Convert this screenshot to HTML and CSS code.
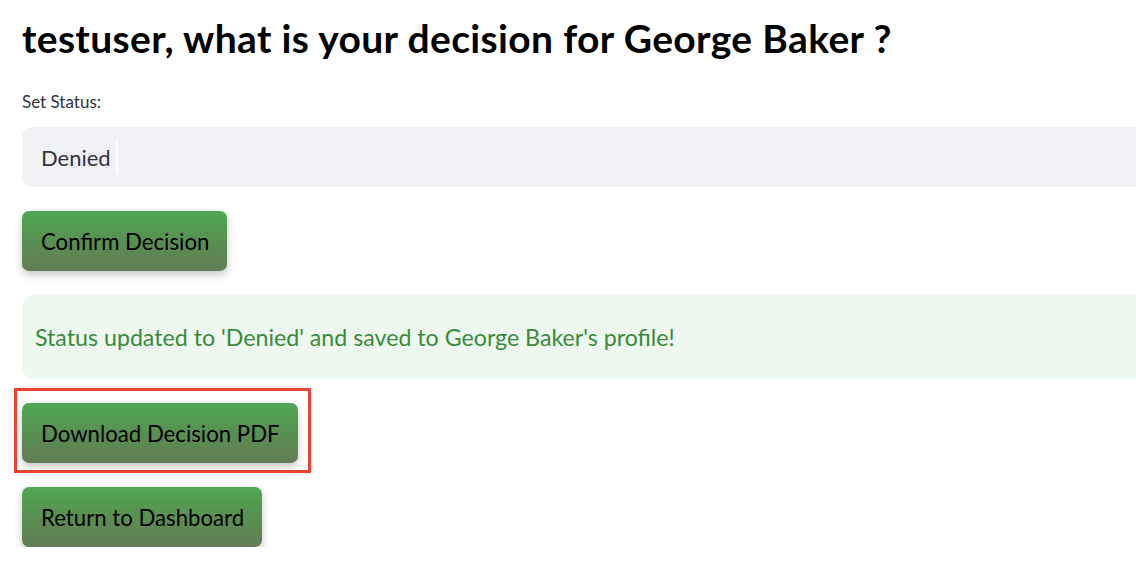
FILE: index.html
```html
<!DOCTYPE html>
<html lang="en">
<head>
<meta charset="utf-8">
<title>Decision</title>
<link rel="stylesheet" href="styles.css">
</head>
<body>
<main class="page">
  <h1 class="title">testuser, what is your decision for George Baker ?</h1>
  <div class="field">
    <label class="label">Set Status:</label>
    <div class="select"><span class="value">Denied</span><span class="caret"></span></div>
  </div>
  <div class="row"><button class="btn">Confirm Decision</button></div>
  <div class="alert">Status updated to 'Denied' and saved to George Baker's profile!</div>
  <div class="row highlight-wrap">
    <button class="btn">Download Decision PDF</button>
    <span class="highlight"></span>
  </div>
  <div class="row"><button class="btn">Return to Dashboard</button></div>
</main>
</body>
</html>
```

FILE: styles.css
```css
* { box-sizing: border-box; }
html, body { margin: 0; padding: 0; background: #ffffff; }
body {
  font-family: "Source Sans Pro", Lato, "Liberation Sans", sans-serif;
  color: #31333f;
  width: 1136px;
  height: 572px;
  overflow: hidden;
}
.page {
  padding: 14px 0 0 22px;
  display: flex;
  flex-direction: column;
  gap: 24px;
  width: 1136px;
  overflow: hidden;
}
.title {
  margin: 0;
  font-size: 39px;
  font-weight: 700;
  color: #000000;
  line-height: 48px;
  letter-spacing: 0.35px;
  white-space: nowrap;
}
.field {
  display: flex;
  flex-direction: column;
  gap: 15px;
  margin-top: 6px;
}
.label {
  font-size: 17px;
  line-height: 20px;
  color: #31333f;
}
.select {
  height: 60px;
  margin-right: -40px;
  background: #f0f2f6;
  border-radius: 10px;
  display: flex;
  align-items: center;
  padding-left: 19px;
}
.value {
  font-size: 22px;
  color: #31333f;
}
.caret {
  width: 2px;
  height: 33px;
  background: #ffffff;
  margin-left: 5px;
}
.row { display: flex; }
.btn {
  font-family: inherit;
  font-size: 22.2px;
  color: #000000;
  height: 60px;
  padding: 0 18px 0 19px;
  border: none;
  border-radius: 7px;
  background: linear-gradient(180deg, #4fa853 0%, #5a8d52 55%, #637c55 100%);
  box-shadow: 0 4px 8px rgba(0, 0, 0, 0.22);
  cursor: pointer;
}
.alert {
  height: 84px;
  margin-right: -40px;
  background: #eef8ef;
  border-radius: 12px;
  display: flex;
  align-items: center;
  padding-left: 13px;
  font-size: 23.2px;
  color: #3a8a3d;
  white-space: nowrap;
}
.highlight-wrap { position: relative; }
.highlight {
  position: absolute;
  left: -8px;
  top: -15px;
  width: 297px;
  height: 85px;
  border: 3px solid #e8432f;
  pointer-events: none;
}
```
